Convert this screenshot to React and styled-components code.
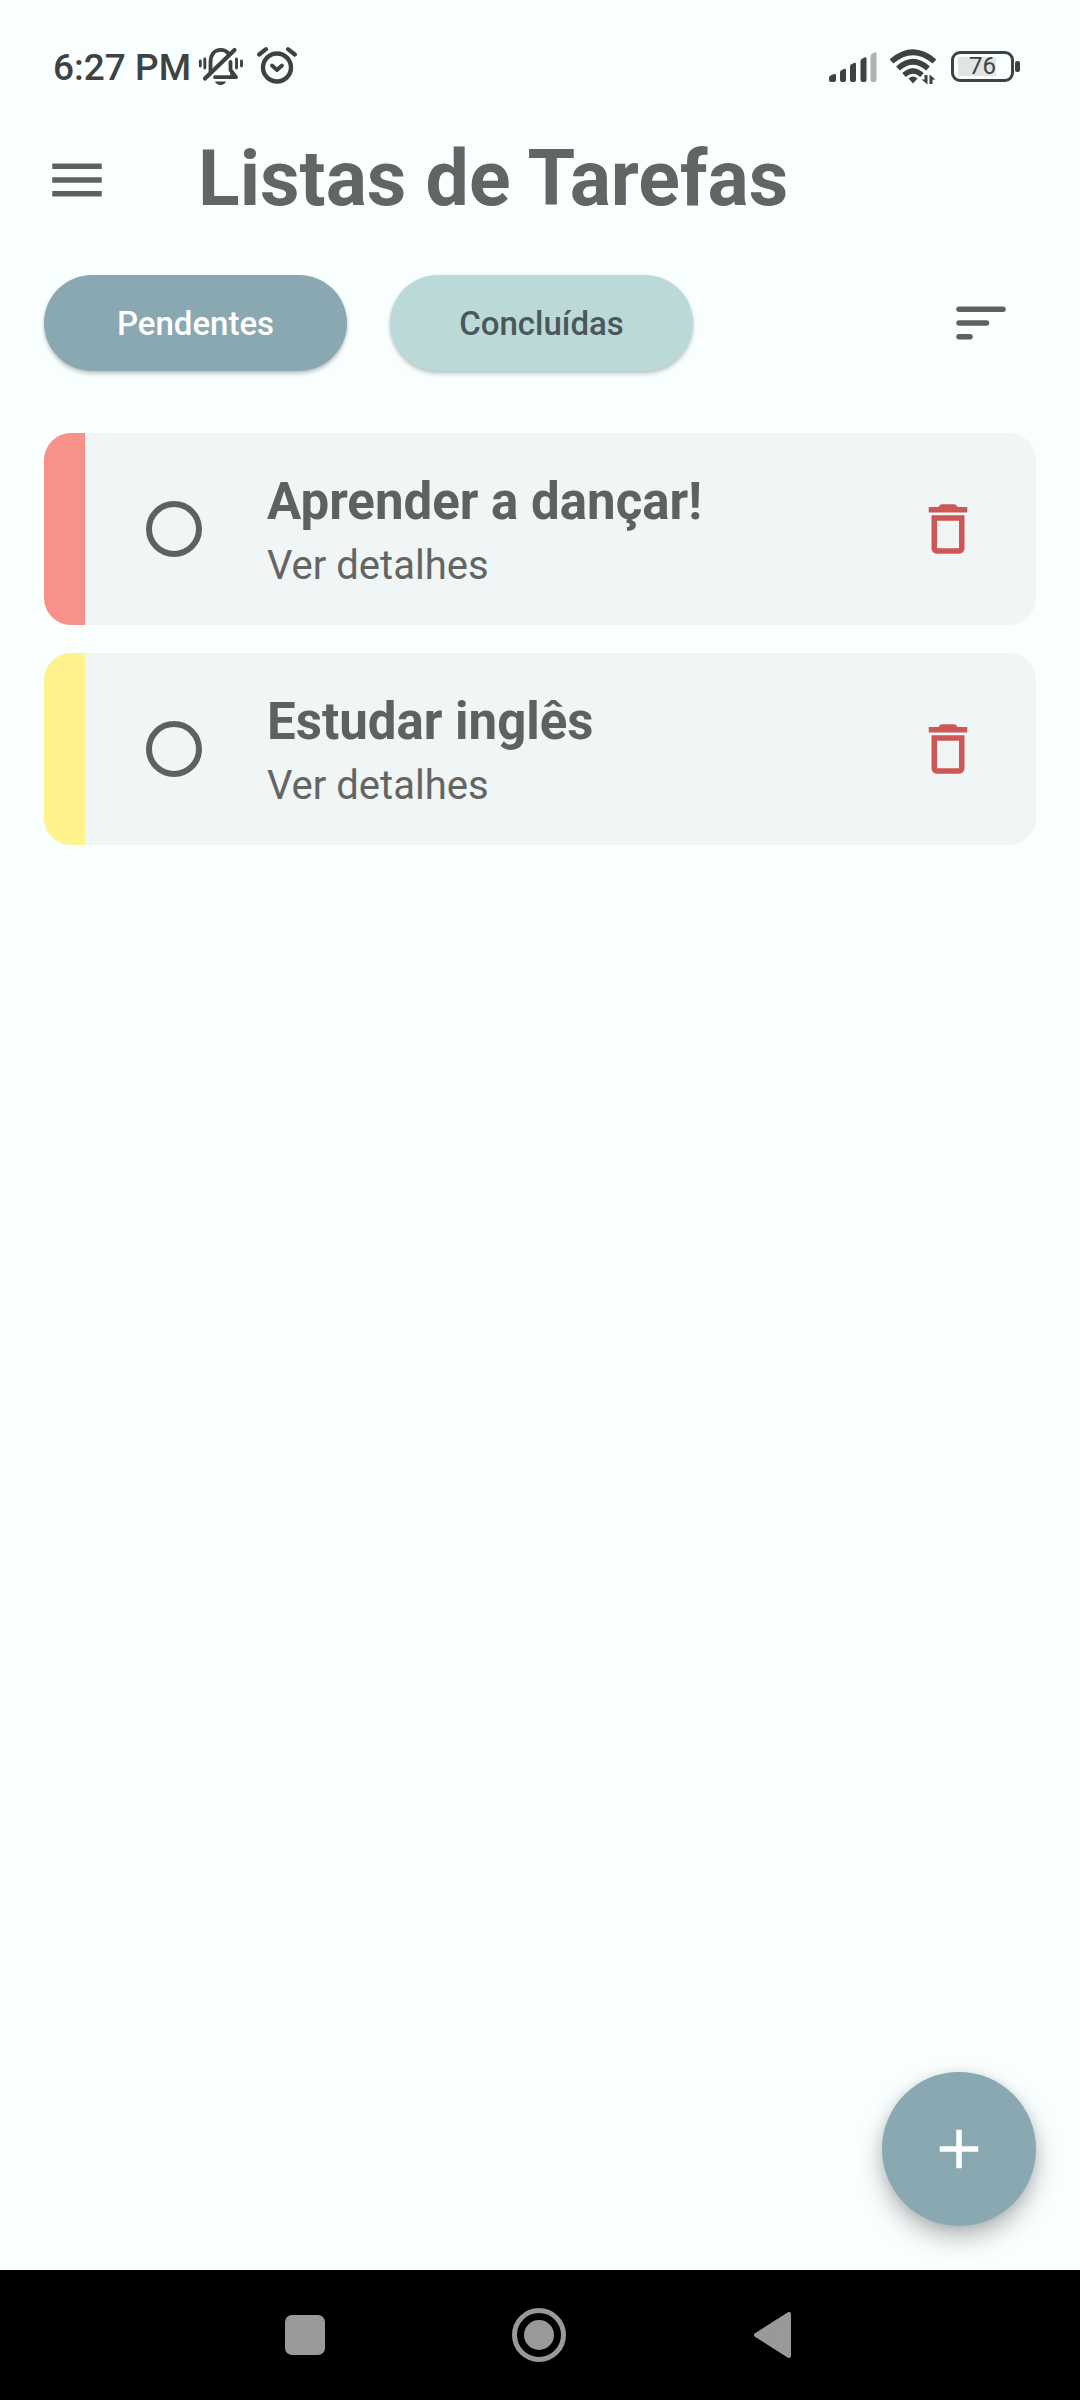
import React, { useState } from 'react';
import styled, { createGlobalStyle } from 'styled-components';

const color = {
  page: '#f9ffff',
  card: '#f0f5f5',
  text: '#636564',
  icon: '#5f6160',
  status: '#3f4241',
  primary: '#8aa8b2',
  secondary: '#bcd9d9',
  danger: '#cd5757',
  high: '#f79189',
  medium: '#fdf28b',
  nav: '#999999',
};

const GlobalStyle = createGlobalStyle`
  *, *::before, *::after { box-sizing: border-box; }
  body {
    margin: 0;
    background: ${color.page};
    color: ${color.text};
    font-family: Roboto, "Noto Sans", sans-serif;
  }
  button { font: inherit; border: 0; padding: 0; background: none; cursor: pointer; }
  svg { display: block; }
`;

const Screen = styled.div`
  display: flex;
  flex-direction: column;
  min-height: 100vh;
`;

const StatusBar = styled.div`
  display: flex;
  justify-content: space-between;
  align-items: center;
  height: 132px;
  padding: 0 60px 0 53px;
  color: ${color.status};
`;

const StatusGroup = styled.div`
  display: flex;
  align-items: center;
  gap: ${(p) => p.$gap}px;
  padding-top: ${(p) => p.$top || 0}px;
`;

const Clock = styled.time`
  font-size: 37px;
  line-height: 46px;
  font-weight: 500;
`;

const Header = styled.header`
  display: flex;
  align-items: center;
  gap: 88px;
  height: 96px;
  padding: 0 44px;
`;

const Title = styled.h1`
  margin: 0;
  padding-bottom: 2px;
  font-size: 77px;
  line-height: 90px;
  font-weight: 700;
`;

const IconButton = styled.button`
  display: grid;
  place-items: center;
  width: 66px;
  height: 66px;
  color: ${(p) => p.$color || color.icon};
`;

const Filters = styled.div`
  display: flex;
  align-items: center;
  gap: 43px;
  padding: 47px 66px 62px 44px;

  ${IconButton} { margin-left: auto; }
`;

const Chip = styled.button`
  width: 303px;
  height: 96px;
  padding-top: 2px;
  border-radius: 48px;
  font-size: 33px;
  line-height: 40px;
  font-weight: 500;
  color: ${(p) => (p.$active ? '#ffffff' : '#4a5857')};
  background: ${(p) => (p.$active ? color.primary : color.secondary)};
  box-shadow: 0 3px 4px rgba(0, 0, 0, 0.2), 0 1px 3px rgba(0, 0, 0, 0.08);
`;

const Main = styled.main`
  display: flex;
  flex-direction: column;
  flex: 1;
  padding: 0 44px 44px;
`;

const TaskList = styled.ul`
  display: flex;
  flex-direction: column;
  gap: 28px;
  margin: 0;
  padding: 0;
  list-style: none;
`;

const Card = styled.li`
  display: flex;
  align-items: center;
  min-height: 192px;
  padding-right: 55px;
  border-radius: 27px;
  overflow: hidden;
  background: ${color.card};
`;

const Priority = styled.span`
  align-self: stretch;
  width: 41px;
  background: ${(p) => p.$color};
`;

const Check = styled.input`
  appearance: none;
  width: 56px;
  height: 56px;
  margin: 0 65px 0 61px;
  border: 6px solid ${color.icon};
  border-radius: 50%;
  cursor: pointer;

  &:checked { background: ${color.icon}; box-shadow: inset 0 0 0 8px ${color.card}; }
`;

const TaskText = styled.div`
  display: flex;
  flex-direction: column;
  flex: 1;
  padding-top: 8px;
`;

const TaskName = styled.label`
  font-size: 51px;
  line-height: 66px;
  font-weight: 700;
  color: ${color.icon};
`;

const Details = styled.a`
  font-size: 40px;
  line-height: 62px;
  color: ${color.text};
  text-decoration: none;
`;

const AddButton = styled.button`
  display: grid;
  place-items: center;
  align-self: flex-end;
  width: 154px;
  height: 154px;
  margin-top: auto;
  border-radius: 50%;
  color: #ffffff;
  background: ${color.primary};
  box-shadow: 0 12px 24px rgba(0, 0, 0, 0.26), 0 2px 12px rgba(0, 0, 0, 0.1);
`;

const SystemNav = styled.nav`
  display: flex;
  justify-content: center;
  height: 130px;
  padding-right: 2px;
  background: #000000;
`;

const NavButton = styled.button`
  display: grid;
  place-items: center;
  width: 234px;
  height: 130px;
  color: ${color.nav};
`;

const MutedBell = () => (
  <svg width="46" height="46" viewBox="0 0 46 46" fill="none" stroke="currentColor" strokeLinecap="round">
    <path d="M12.5 27V17.5C12.5 9 17 4.8 22.500 4.800C26 4.800 28.500 6 30 8" strokeWidth="3.800" />
    <path d="M7 33.500L36.500 5" strokeWidth="4.200" />
    <path d="M32.500 17V25L38 32.200H17" strokeWidth="3.800" strokeLinejoin="round" />
    <path d="M32.500 17V25L38 32H32.500L31.500 20Z" fill="currentColor" stroke="none" />
    <path d="M17 36.500H28C26.500 41 18.500 41 17 36.500Z" fill="currentColor" stroke="none" />
    <path d="M2.300 16V21M6.800 14V23M38.500 14V23M43.500 16V21" strokeWidth="2.900" />
  </svg>
);

const AlarmClock = () => (
  <svg width="40" height="46" viewBox="0 0 40 46" fill="none" stroke="currentColor" strokeLinecap="round" strokeLinejoin="round">
    <circle cx="20" cy="22.500" r="14" strokeWidth="4.400" />
    <path d="M2.200 9.500L9 4.200M37.800 9.500L31 4.200" strokeWidth="4.200" />
    <path d="M15 20.500L20 25L25 20.500" strokeWidth="3.800" />
  </svg>
);

const Signal = () => (
  <svg width="48" height="40" viewBox="0 0 48 40" fill="currentColor">
    <path d="M0 32Q0 30 2 29.200L5 28Q7 27.500 7 29V34Q7 36 5 36H2Q0 36 0 34Z" />
    <path d="M11 26.500Q11 25 12.500 24.200L15 22.900Q17 22.300 17 24V34Q17 36 15 36H13Q11 36 11 34Z" />
    <path d="M21 20.500Q21 19 22.500 18.200L25 16.900Q27 16.300 27 18V34Q27 36 25 36H23Q21 36 21 34Z" />
    <path d="M31.500 15Q31.500 13.500 33 12.700L35.500 11.400Q37.500 10.800 37.500 12.500V34Q37.500 36 35.500 36H33.500Q31.500 36 31.500 34Z" />
    <path opacity=".4" d="M41.500 10Q41.500 8.500 43 7.700L45.500 6.400Q47.500 5.800 47.500 7.500V34Q47.500 36 45.500 36H43.500Q41.500 36 41.500 34Z" />
  </svg>
);

const Wifi = () => (
  <svg width="48" height="40" viewBox="0 0 48 40" fill="none" stroke="currentColor">
    <path d="M1.500 15.500Q23 -3 44.500 15.500" strokeWidth="5.600" />
    <path d="M8 22.500Q23 9 38 22.500" strokeWidth="5.600" />
    <path d="M14 29Q23 21 32 29" strokeWidth="5.200" />
    <path d="M18.500 32.500Q23 28.500 27.500 32.500L23 37.500Z" fill="currentColor" stroke="none" />
    <path d="M37.500 29V38.500L31.500 33.500H34.500V29Z" fill="currentColor" stroke="none" />
    <path d="M39.500 38V28.500L45.500 33.500H42.500V38Z" fill="currentColor" stroke="none" />
  </svg>
);

const BatteryBody = styled.span`
  display: grid;
  place-items: center;
  width: 63px;
  height: 31px;
  border: 3px solid currentColor;
  border-radius: 9px;
  font-size: 24px;
  line-height: 25px;
  background: linear-gradient(#e0e5e4, #e0e5e4) 4px 3px / 38px 19px no-repeat;
`;

const BatteryTip = styled.span`
  width: 5px;
  height: 11px;
  border-radius: 2px;
  background: currentColor;
`;

const MenuIcon = () => (
  <svg width="66" height="66" viewBox="0 0 24 24" fill="currentColor">
    <path d="M3 18h18v-2H3v2zm0-5h18v-2H3v2zm0-7v2h18V6H3z" />
  </svg>
);

const SortIcon = () => (
  <svg width="66" height="66" viewBox="0 0 24 24" stroke="currentColor" strokeWidth="2" strokeLinecap="round">
    <path d="M4 7H20M4 12H14M4 17H8" />
  </svg>
);

const TrashIcon = () => (
  <svg width="66" height="66" viewBox="0 0 24 24" fill="currentColor">
    <path d="M5 4H8.500Q8.900 3 9.700 3H14.300Q15.100 3 15.500 4H19V6H5Z" />
    <path fillRule="evenodd" d="M6 7H18V19C18 20.100 17.100 21 16 21H8C6.900 21 6 20.100 6 19ZM8 9V19H16V9Z" />
  </svg>
);

const PlusIcon = () => (
  <svg width="66" height="66" viewBox="0 0 24 24" fill="currentColor">
    <path d="M19 13h-6v6h-2v-6H5v-2h6V5h2v6h6v2z" />
  </svg>
);

const initialTasks = [
  { id: 'dancar', name: 'Aprender a dançar!', level: color.high },
  { id: 'ingles', name: 'Estudar inglês', level: color.medium },
];

function Task({ task, onDelete }) {
  return (
    <Card>
      <Priority $color={task.level} />
      <Check type="checkbox" id={task.id} />
      <TaskText>
        <TaskName htmlFor={task.id}>{task.name}</TaskName>
        <Details href={`#${task.id}`}>Ver detalhes</Details>
      </TaskText>
      <IconButton type="button" aria-label="Excluir" $color={color.danger} onClick={onDelete}>
        <TrashIcon />
      </IconButton>
    </Card>
  );
}

export default function App() {
  const [tasks, setTasks] = useState(initialTasks);
  const [tab, setTab] = useState('Pendentes');

  return (
    <>
      <GlobalStyle />
      <Screen>
        <StatusBar>
          <StatusGroup $gap={7} $top={4}>
            <Clock>6:27 PM</Clock>
            <StatusGroup $gap={13}>
              <MutedBell />
              <AlarmClock />
            </StatusGroup>
          </StatusGroup>
          <StatusGroup $gap={13}>
            <Signal />
            <Wifi />
            <StatusGroup $gap={1}>
              <BatteryBody>76</BatteryBody>
              <BatteryTip />
            </StatusGroup>
          </StatusGroup>
        </StatusBar>

        <Header>
          <IconButton type="button" aria-label="Menu">
            <MenuIcon />
          </IconButton>
          <Title>Listas de Tarefas</Title>
        </Header>

        <Filters>
          {['Pendentes', 'Concluídas'].map((name) => (
            <Chip key={name} type="button" $active={tab === name} aria-pressed={tab === name} onClick={() => setTab(name)}>
              {name}
            </Chip>
          ))}
          <IconButton type="button" aria-label="Ordenar">
            <SortIcon />
          </IconButton>
        </Filters>

        <Main>
          <TaskList>
            {tasks.map((task) => (
              <Task key={task.id} task={task} onDelete={() => setTasks(tasks.filter((t) => t.id !== task.id))} />
            ))}
          </TaskList>
          <AddButton type="button" aria-label="Adicionar">
            <PlusIcon />
          </AddButton>
        </Main>

        <SystemNav>
          <NavButton type="button" aria-label="Recentes">
            <svg width="40" height="40" viewBox="0 0 40 40" fill="currentColor">
              <rect width="40" height="40" rx="7" />
            </svg>
          </NavButton>
          <NavButton type="button" aria-label="Início">
            <svg width="54" height="54" viewBox="0 0 54 54" fill="currentColor">
              <circle cx="27" cy="27" r="24.500" fill="none" stroke="currentColor" strokeWidth="5" />
              <circle cx="27" cy="27" r="15" />
            </svg>
          </NavButton>
          <NavButton type="button" aria-label="Voltar">
            <svg width="40" height="46" viewBox="0 0 40 46" fill="currentColor" stroke="currentColor" strokeWidth="4" strokeLinejoin="round">
              <path d="M3 23L36 2V44Z" />
            </svg>
          </NavButton>
        </SystemNav>
      </Screen>
    </>
  );
}
